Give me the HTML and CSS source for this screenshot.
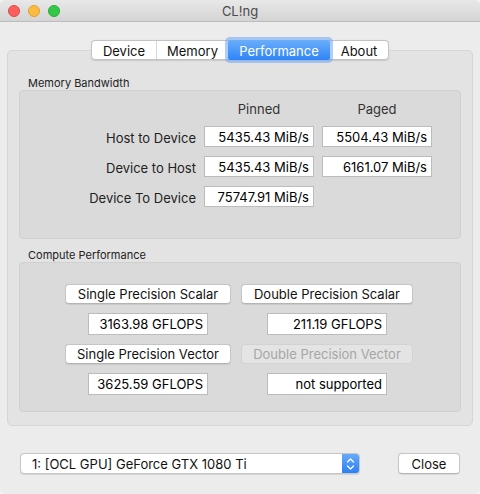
FILE: index.html
```html
<!DOCTYPE html>
<html>
<head>
<meta charset="utf-8">
<link rel="stylesheet" href="styles.css">
</head>
<body>
<div class="window">
  <div class="titlebar">
    <div class="lights">
      <span class="light red"></span>
      <span class="light yellow"></span>
      <span class="light green"></span>
    </div>
    <div class="title">CL!ng</div>
    <div></div>
  </div>
  <div class="content">
    <div class="tabs">
      <div class="segmented">
        <div class="seg seg-device">Device</div>
        <div class="seg seg-memory">Memory</div>
        <div class="seg seg-perf selected">Performance</div>
        <div class="seg seg-about">About</div>
      </div>
    </div>
    <div class="tabbox">
      <div class="group-label">Memory Bandwidth</div>
      <div class="group mem">
        <div class="mem-grid">
          <div></div>
          <div class="col-head">Pinned</div>
          <div class="col-head">Paged</div>

          <div class="row-label">Host to Device</div>
          <div class="field">5435.43 MiB/s</div>
          <div class="field">5504.43 MiB/s</div>

          <div class="row-label">Device to Host</div>
          <div class="field">5435.43 MiB/s</div>
          <div class="field">6161.07 MiB/s</div>

          <div class="row-label">Device To Device</div>
          <div class="field">75747.91 MiB/s</div>
          <div></div>
        </div>
      </div>
      <div class="group-label second">Compute Performance</div>
      <div class="group compute">
        <div class="compute-grid">
          <button class="btn">Single Precision Scalar</button>
          <button class="btn">Double Precision Scalar</button>
          <div class="field cfield">3163.98 GFLOPS</div>
          <div class="field cfield">211.19 GFLOPS</div>
          <button class="btn">Single Precision Vector</button>
          <button class="btn" disabled>Double Precision Vector</button>
          <div class="field cfield">3625.59 GFLOPS</div>
          <div class="field cfield">not supported</div>
        </div>
      </div>
    </div>
    <div class="bottombar">
      <div class="popup">
        <span class="popup-text">1: [OCL GPU] GeForce GTX 1080 Ti</span>
        <span class="popup-arrows">
          <svg width="9" height="14" viewBox="0 0 9 14">
            <path d="M1.5 5 L4.5 2 L7.5 5" fill="none" stroke="#fff" stroke-width="1.3" stroke-linecap="round" stroke-linejoin="round"/>
            <path d="M1.5 9 L4.5 12 L7.5 9" fill="none" stroke="#fff" stroke-width="1.3" stroke-linecap="round" stroke-linejoin="round"/>
          </svg>
        </span>
      </div>
      <button class="btn close">Close</button>
    </div>
  </div>
</div>
</body>
</html>
```

FILE: styles.css
```css
* { box-sizing: border-box; }
html, body { margin: 0; padding: 0; background: #f4f4f4; }
body { font-family: Inter, "Noto Sans", sans-serif; font-size: 13px; color: #1b1b1b; }

.window {
  width: 480px;
  height: 494px;
  background: #ececec;
  border-radius: 5px;
  overflow: hidden;
}

.titlebar {
  height: 22px;
  display: grid;
  grid-template-columns: 1fr auto 1fr;
  align-items: center;
  background: linear-gradient(#e9e8e9, #d5d4d5);
  border-bottom: 1px solid #bdbcbd;
}
.lights { display: flex; gap: 8px; padding-left: 8px; align-items: center; }
.light { width: 12px; height: 12px; border-radius: 50%; display: block; }
.red { background: #fc605c; border: 1px solid #df4744; }
.yellow { background: #fdbc40; border: 1px solid #de9f34; }
.green { background: #34c84a; border: 1px solid #27aa35; }
.title { font-size: 13px; color: #4a4a4a; padding-top: 1px; }

.content { padding: 18px 7px 0; }

.tabs { display: flex; justify-content: center; position: relative; z-index: 1; height: 20px; }
.segmented {
  display: flex;
  height: 20px;
  background: #fff;
  border: 1px solid #c3c3c3;
  border-radius: 4px;
  box-shadow: 0 0.5px 1px rgba(0,0,0,0.12);
}
.seg {
  display: flex; align-items: center; justify-content: center;
  height: 18px;
  padding-top: 1px;
  font-size: 13px;
  color: #111;
  border-left: 1px solid #d7d7d7;
}
.seg:first-child { border-left: none; border-radius: 3px 0 0 3px; }
.seg:last-child { border-radius: 0 3px 3px 0; }
.seg-device { width: 64px; }
.seg-memory { width: 72px; }
.seg-perf { width: 102px; }
.seg-about { width: 58px; }
.seg.selected {
  background: linear-gradient(#6aaefa, #2f84f6);
  color: #fff;
  border-left: none;
  height: 20px;
  margin-top: -1px;
  border-radius: 2px;
  box-shadow: 0 0 0 3px rgba(110, 165, 245, 0.55);
  position: relative;
  z-index: 1;
}
.seg.selected + .seg { border-left: none; }

.tabbox {
  margin-top: -10px;
  height: 376px;
  background: #e3e3e3;
  border: 1px solid #d6d6d6;
  border-radius: 5px;
  padding: 25px 11px 0;
}
.group-label {
  font-size: 11px;
  line-height: 14px;
  padding-left: 9px;
  color: #222;
}
.group-label.second { margin-top: 9px; }
.group {
  background: #dadada;
  border: 1px solid #d0d0d0;
  border-radius: 4px;
}
.mem { height: 149px; padding-top: 11px; }
.compute { height: 150px; padding: 21px 0 0 45px; }

.mem-grid {
  display: grid;
  grid-template-columns: 176px 110px 110px;
  grid-template-rows: 15px 21px 21px 21px;
  column-gap: 8px;
  row-gap: 9px;
  align-items: center;
}
.mem-grid .col-head { margin-bottom: 1px; }
.col-head { text-align: center; color: #333; line-height: 15px; }
.row-label { text-align: right; color: #222; padding-top: 2px; }

.field {
  height: 21px;
  background: #fff;
  border: 1px solid #bcbcbc;
  text-align: right;
  padding-right: 4px;
  line-height: 20px;
  color: #000;
  white-space: nowrap;
}

.compute-grid {
  display: grid;
  grid-template-columns: 166px 172px;
  column-gap: 10px;
  row-gap: 9px;
}
.cfield { width: 120px; height: 22px; line-height: 21px; justify-self: center; }

.btn {
  font-family: inherit;
  font-size: 13px;
  color: #111;
  height: 20px;
  padding: 1px 10px 0;
  background: #fff;
  border: 1px solid #c6c6c6;
  border-bottom-color: #b4b4b4;
  border-radius: 4px;
  box-shadow: 0 0.5px 1px rgba(0,0,0,0.08);
  white-space: nowrap;
  width: 100%;
  line-height: 17px;
}
.btn:disabled {
  background: #e4e4e4;
  border-color: #d2d2d2;
  color: #a6a6a6;
  box-shadow: none;
}

.bottombar {
  margin-top: 27px;
  display: flex;
  justify-content: space-between;
  padding: 0 13px 0 13px;
}
.popup {
  width: 340px;
  height: 21px;
  background: #fff;
  border: 1px solid #c6c6c6;
  border-radius: 4px;
  display: flex;
  align-items: center;
  overflow: hidden;
  box-shadow: 0 0.5px 1px rgba(0,0,0,0.1);
}
.popup-text { flex: 1; padding-left: 11px; padding-top: 1px; color: #111; }
.popup-arrows {
  width: 17px;
  height: 100%;
  background: linear-gradient(#66abfa, #2c80f5);
  display: flex;
  align-items: center;
  justify-content: center;
}
.close { width: 62px; height: 21px; }
```
